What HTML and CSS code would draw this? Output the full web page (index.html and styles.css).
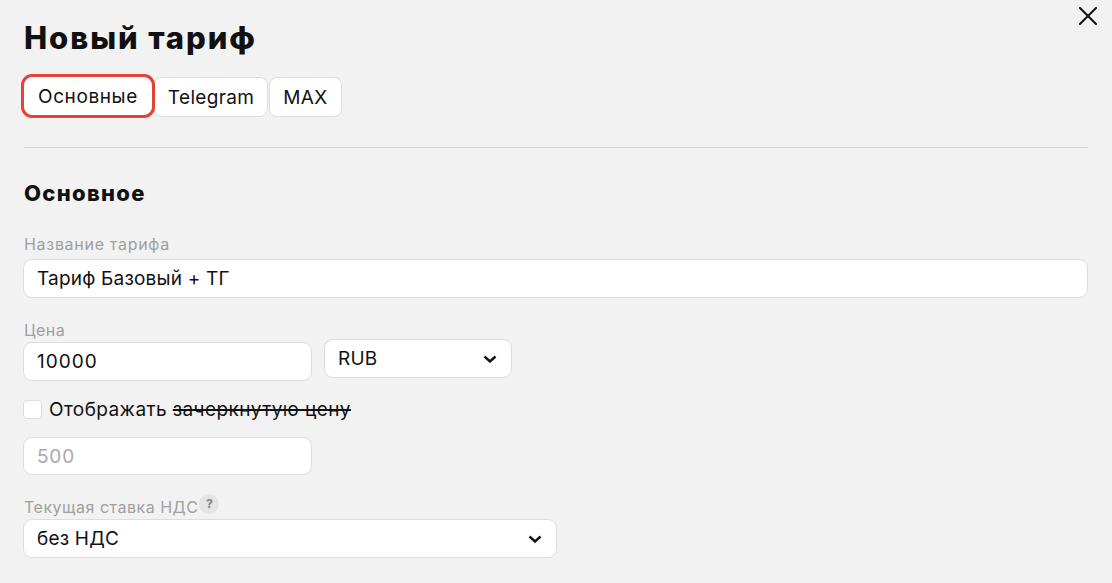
FILE: index.html
```html
<!DOCTYPE html>
<html lang="ru">
<head>
<meta charset="utf-8">
<title>Новый тариф</title>
<link rel="stylesheet" href="styles.css">
</head>
<body>
<div class="modal">
  <button class="close" aria-label="Закрыть">
    <svg width="18" height="18" viewBox="0 0 18 18"><path d="M1 1L17 17M17 1L1 17" stroke="#111" stroke-width="2" stroke-linecap="square"/></svg>
  </button>
  <h1 class="title">Новый тариф</h1>
  <div class="tabs">
    <div class="tab tab-active">Основные</div>
    <div class="tab">Telegram</div>
    <div class="tab">MAX</div>
  </div>
  <div class="divider"></div>
  <h2 class="section-title">Основное</h2>

  <div class="label label-name">Название тарифа</div>
  <div class="field field-full">Тариф Базовый + ТГ</div>

  <div class="price-row">
    <div class="price-col">
      <div class="label">Цена</div>
      <div class="field field-price">10000</div>
    </div>
    <div class="currency-col">
      <div class="field select select-currency">RUB
        <svg class="chevron" width="14" height="8" viewBox="0 0 14 8"><path d="M1.5 1.5L7 6.5L12.5 1.5" fill="none" stroke="#111" stroke-width="2.4"/></svg>
      </div>
    </div>
  </div>

  <div class="check-row">
    <span class="checkbox"></span>
    <span class="check-text">Отображать <s>зачеркнутую цену</s></span>
  </div>

  <div class="field field-price field-old placeholder">500</div>

  <div class="label label-vat">Текущая ставка НДС<span class="help">?</span></div>
  <div class="field select select-vat">без НДС
    <svg class="chevron" width="14" height="8" viewBox="0 0 14 8"><path d="M1.5 1.5L7 6.5L12.5 1.5" fill="none" stroke="#111" stroke-width="2.4"/></svg>
  </div>
</div>
</body>
</html>
```
FILE: styles.css
```css
* { box-sizing: border-box; }
html, body { margin: 0; padding: 0; }
body {
  background: #f2f2f2;
  font-family: Inter, "Noto Sans", sans-serif;
  color: #111;
  width: 1112px;
  height: 583px;
  overflow: hidden;
}
.modal {
  position: relative;
  padding: 20px 24px 0 24px;
}
.close {
  position: absolute;
  top: 7px;
  right: 15px;
  width: 18px;
  height: 18px;
  padding: 0;
  border: 0;
  background: none;
  display: flex;
}
.title {
  margin: 0;
  font-size: 31px;
  line-height: 36px;
  font-weight: 800;
  letter-spacing: 1.9px;
}
.tabs {
  display: flex;
  gap: 1px;
  margin-top: 21px;
}
.tab {
  height: 40px;
  padding: 0 13px;
  display: flex;
  align-items: center;
  background: #fff;
  border: 1px solid #dedede;
  border-radius: 8px;
  font-size: 19px;
  letter-spacing: 0.35px;
}
.tab-active {
  border-color: #fff;
  box-shadow: 0 0 0 3px #e5423a;
  height: 38px;
  margin-right: 1px;
  position: relative;
  z-index: 1;
  letter-spacing: 0.6px;
}
.divider {
  height: 1px;
  background: #d4d4d4;
  margin-top: 30px;
}
.section-title {
  margin: 31px 0 0 0;
  font-size: 22px;
  line-height: 28px;
  font-weight: 800;
  letter-spacing: 1.3px;
}
.label {
  font-size: 16px;
  line-height: 20px;
  color: #a0a0a0;
  letter-spacing: 0.5px;
}
.label-name { margin-top: 27px; letter-spacing: 0.7px; }
.field {
  height: 39px;
  background: #fff;
  border: 1px solid #dddddd;
  border-radius: 9px;
  display: flex;
  align-items: center;
  padding: 0 13px;
  font-size: 19px;
  letter-spacing: 0.2px;
}
.field-full {
  margin-top: 5px;
  width: 1065px;
  margin-left: -1px;
}
.price-row {
  display: flex;
  gap: 11px;
  margin-top: 22px;
}
.price-col { width: 289px; }
.field-price { width: 289px; margin-left: -1px; }
.price-col .field-price { margin-top: 2px; letter-spacing: 1px; }
.currency-col { padding-top: 19px; }
.select { justify-content: space-between; }
.select-currency { width: 188px; }
.chevron { margin-right: 1px; }
.check-row {
  display: flex;
  align-items: center;
  gap: 7px;
  margin-top: 19px;
  height: 19px;
}
.checkbox {
  width: 19px;
  height: 19px;
  margin-left: -1px;
  background: #fff;
  border: 1px solid #dddddd;
  border-radius: 4px;
}
.check-text { font-size: 19px; letter-spacing: 0.4px; }
.check-text s { text-decoration-thickness: 2px; }
.field-old { margin-top: 18px; height: 38px; letter-spacing: 0.8px; }
.placeholder { color: #a8a8a8; }
.label-vat {
  margin-top: 22px;
  display: flex;
  align-items: center;
}
.help {
  width: 20px;
  height: 20px;
  border-radius: 50%;
  background: #e4e4e4;
  color: #8a8a8a;
  font-size: 12px;
  font-weight: 800;
  letter-spacing: 0;
  display: inline-flex;
  align-items: center;
  justify-content: center;
  margin-left: 1px;
  margin-top: -6px;
}
.select-vat {
  margin-top: 2px;
  width: 534px;
  margin-left: -1px;
}
```
